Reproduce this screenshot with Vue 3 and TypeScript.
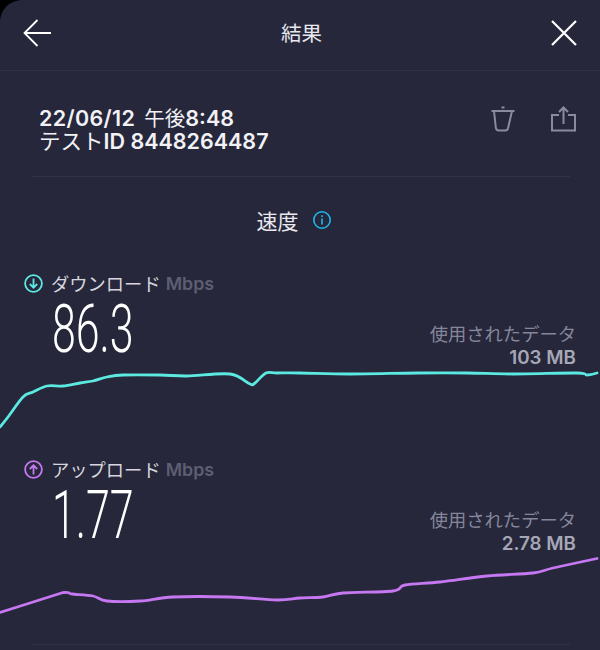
<script setup lang="ts">
interface SpeedRow {
  id: string;
  label: string;
  value: string;
  used: string;
  color: string;
  arrow: string;
  offset: number;
  points: number[][];
}

const rows: SpeedRow[] = [
  {
    id: 'down',
    label: 'ダウンロード',
    value: '86.3',
    used: '103 MB',
    color: '#5ce9e1',
    arrow: 'M9.5 4.500v9M5.800 10l3.700 3.700 3.700-3.700',
    offset: 359,
    points: [
      [0, 427], [8, 417], [23, 397], [33, 392], [47, 386], [63, 386], [80, 383], [93, 381],
      [107, 377], [123, 375], [160, 375], [187, 376], [230, 374], [250, 384], [255, 383],
      [266, 373], [277, 373], [300, 373], [350, 374], [417, 373], [467, 373], [513, 374],
      [577, 373], [587, 375], [597, 373]
    ]
  },
  {
    id: 'up',
    label: 'アップロード',
    value: '1.77',
    used: '2.78 MB',
    color: '#c678f2',
    arrow: 'M9.5 14.500v-9M5.800 9l3.700-3.700 3.700 3.700',
    offset: 545,
    points: [
      [0, 612.5], [30, 603], [60, 593.5], [65, 592.5], [69, 592.8], [72, 594], [93, 596], [107, 601],
      [140, 601], [173, 597], [230, 597], [277, 600], [300, 598], [323, 597], [343, 593], [393, 591],
      [405, 585], [440, 582], [487, 576], [533, 573], [553, 568], [597, 558.5]
    ]
  }
];

// rounds the measured points off into a curve (catmull-rom)
const toPath = (row: SpeedRow) => {
  const pts = row.points.map(([x, y]) => [x, y - row.offset]);
  let d = `M${pts[0][0]} ${pts[0][1]}`;
  for (let i = 0; i < pts.length - 1; i++) {
    const p0 = pts[Math.max(i - 1, 0)];
    const p1 = pts[i];
    const p2 = pts[i + 1];
    const p3 = pts[Math.min(i + 2, pts.length - 1)];
    const c1 = [p1[0] + (p2[0] - p0[0]) / 6, p1[1] + (p2[1] - p0[1]) / 6];
    const c2 = [p2[0] - (p3[0] - p1[0]) / 6, p2[1] - (p3[1] - p1[1]) / 6];
    d += ` C${c1[0]} ${c1[1]} ${c2[0]} ${c2[1]} ${p2[0]} ${p2[1]}`;
  }
  return d;
};
</script>

<template>
  <div class="screen">
    <header class="topbar">
      <svg class="icon-back" width="30" height="30" viewBox="0 0 30 30" fill="none" stroke="#fff" stroke-width="1.800">
        <path d="M29 15H3M15.500 2 2.500 15l13 13" />
      </svg>
      <span class="topbar-title">結果</span>
      <svg class="icon-close" width="26" height="26" viewBox="0 0 26 26" fill="none" stroke="#fff" stroke-width="2.200">
        <path d="M1 1l24 24M25 1 1 25" />
      </svg>
    </header>

    <section class="info">
      <div class="info-text">
        <div><b class="date">22/06/12</b> <span class="ampm">午後</span><b>8:48</b></div>
        <div>テスト<b>ID 8448264487</b></div>
      </div>
      <div class="info-actions">
        <svg width="24" height="26" viewBox="0 0 24 26" fill="none" stroke="#8a8b9e" stroke-width="2">
          <path d="M0.500 5h23M10.500 1.500h3M3 5l1.800 16.500c.2 2 1.200 3 3 3h6.400c1.800 0 2.800-1 3-3L21 5" />
        </svg>
        <svg width="25" height="26" viewBox="0 0 25 26" fill="none" stroke="#8a8b9e" stroke-width="2">
          <path d="M8 9H1v15.500h23V9H17M12.500 18V1.500M8 6l4.500-4.500L17 6" />
        </svg>
      </div>
    </section>

    <div class="divider" />

    <h2 class="speed-title">
      速度
      <svg width="20" height="20" viewBox="0 0 20 20" fill="none" stroke="#1fb8f0" stroke-width="1.600">
        <circle cx="10" cy="10" r="8.200" />
        <path d="M10 8.500v6M10 5.200v1.800" />
      </svg>
    </h2>

    <section v-for="row in rows" :key="row.id" class="speed-row">
      <div class="speed-head">
        <div>
          <div class="speed-label">
            <svg width="19" height="19" viewBox="0 0 19 19" fill="none" :stroke="row.color" stroke-width="1.800">
              <circle cx="9.500" cy="9.500" r="8.400" />
              <path :d="row.arrow" />
            </svg>
            <span>{{ row.label }}</span>
            <b class="unit">Mbps</b>
          </div>
          <div class="speed-value">{{ row.value }}</div>
        </div>
        <div class="used">
          <div>使用されたデータ</div>
          <b>{{ row.used }}</b>
        </div>
      </div>
      <svg class="graph" width="600" height="90" viewBox="0 0 600 90" fill="none">
        <path :d="toPath(row)" :stroke="row.color" stroke-width="2.800" stroke-linecap="round" />
      </svg>
    </section>

    <div class="divider divider-bottom" />
  </div>
</template>

<style scoped>
.screen {
  position: relative;
  width: 600px;
  height: 650px;
  overflow: hidden;
  box-sizing: border-box;
  background: #26273a;
  border-top-left-radius: 22px;
  color: #fff;
  font-family: "Inter", "Noto Sans CJK JP", sans-serif;
}

.topbar {
  display: flex;
  align-items: center;
  justify-content: space-between;
  box-sizing: border-box;
  height: 71px;
  padding: 0 23px 4px 22px;
  border-bottom: 1px solid #30314a;
}

.topbar-title {
  margin-bottom: 2px;
  font-size: 20.500px;
  color: #e8e8ee;
}

.info {
  display: flex;
  justify-content: space-between;
  align-items: flex-start;
  box-sizing: border-box;
  height: 105px;
  padding: 36px 24px 0 39px;
}

.info-text {
  font-size: 21.500px;
  line-height: 23px;
  color: #f2f2f6;
}

.info-text b {
  font-weight: 600;
}

.info-text .date {
  letter-spacing: 0.35px;
}

.ampm {
  margin-left: 3px;
  font-size: 20.500px;
}

.info-actions {
  display: flex;
  gap: 36px;
  margin-top: -1px;
}

.divider {
  height: 1px;
  margin: 0 30px 0 32px;
  background: #30314a;
}

.divider-bottom {
  margin-top: 7px;
}

.speed-title {
  display: flex;
  align-items: center;
  justify-content: center;
  gap: 13px;
  height: 88px;
  margin: 0;
  padding: 0 12px 2px 0;
  font-size: 21px;
  font-weight: 400;
  color: #e8e8ee;
  box-sizing: border-box;
}

.speed-row {
  height: 186px;
}

.speed-head {
  display: flex;
  justify-content: space-between;
  align-items: flex-start;
  height: 94px;
  padding: 6px 24px 0 24px;
  box-sizing: border-box;
}

.speed-label {
  display: flex;
  align-items: center;
  height: 24px;
  font-size: 18.300px;
  color: #d6d6de;
}

.speed-label svg {
  margin-right: 8px;
}

.unit {
  margin-left: 5px;
  font-size: 17.800px;
  font-weight: 600;
  color: #5d5e72;
}

.speed-value {
  margin: 12px 0 0 28px;
  font-family: "Roboto", sans-serif;
  font-size: 66px;
  font-weight: 300;
  line-height: 46px;
  transform: scaleX(0.65);
  transform-origin: left center;
}

.used {
  margin-top: 52px;
  text-align: right;
  font-size: 18.300px;
  line-height: 23px;
  color: #85869a;
}

.used b {
  display: block;
  font-size: 18.800px;
  font-weight: 600;
  color: #a6a7b6;
}

.graph {
  display: block;
}
</style>

<style>
html,
body {
  background: #000;
}
</style>
